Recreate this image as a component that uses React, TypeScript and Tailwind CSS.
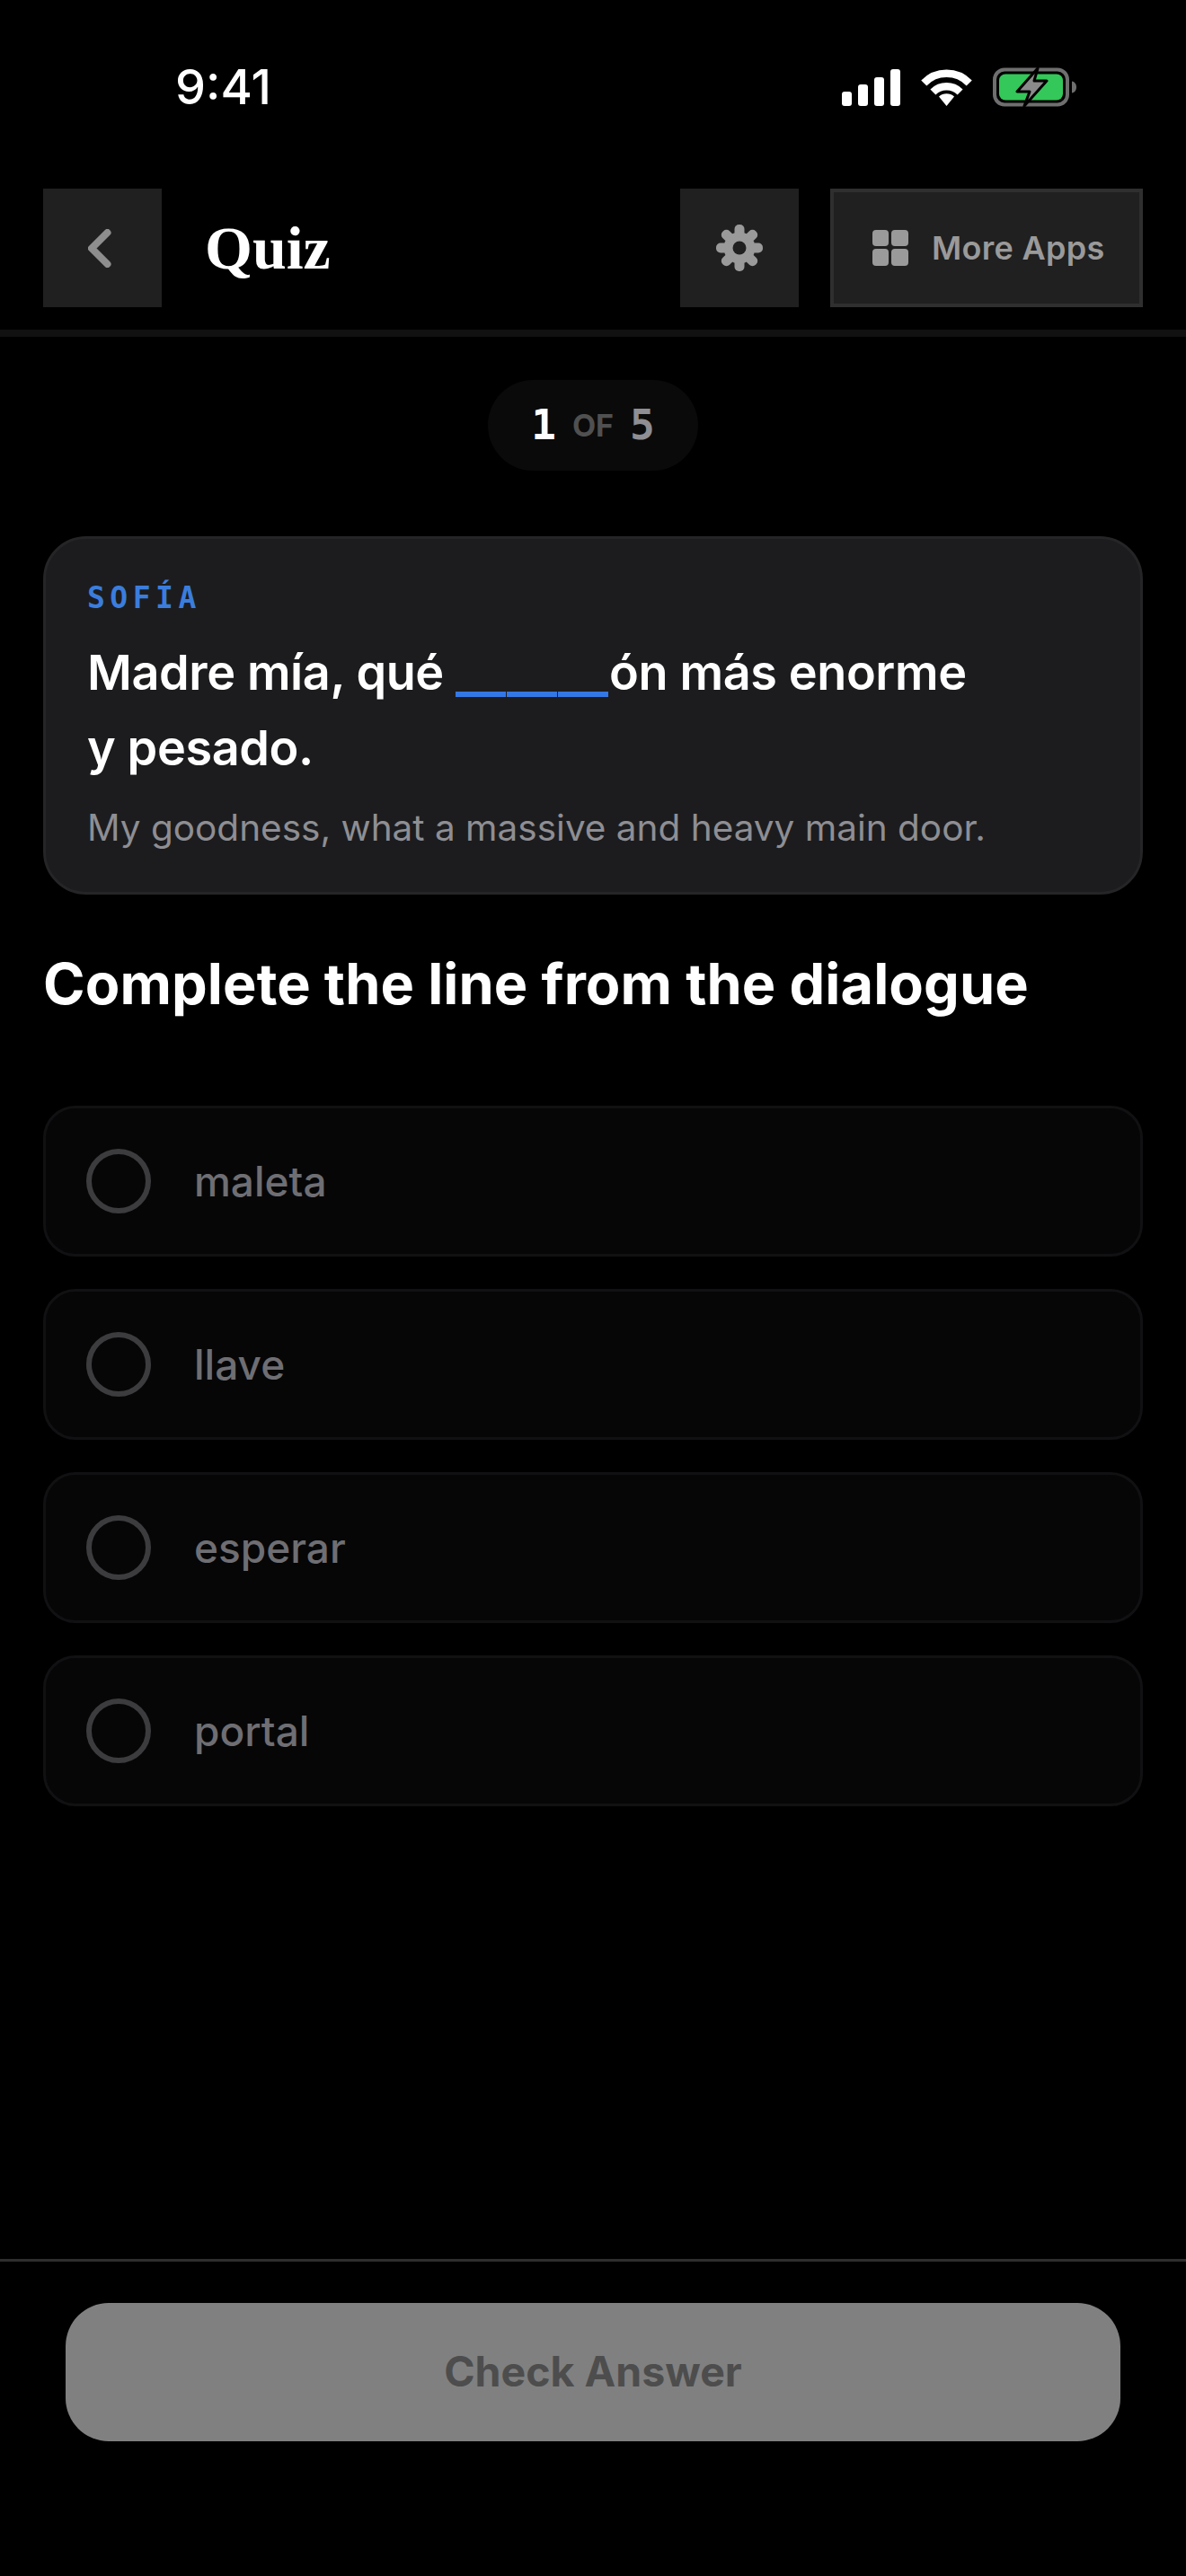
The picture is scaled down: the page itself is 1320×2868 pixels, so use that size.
const inter = "font-['Inter',sans-serif]";

function Gear() {
  const angles = [0, 45, 90, 135, 180, 225, 270, 315];
  return (
    <svg width="52" height="52" viewBox="0 0 52 52">
      <circle cx="26" cy="26" r="17.5" fill="#9a9a9a" />
      {angles.map((a) => (
        <rect key={a} x="20.5" y="0" width="11" height="14" rx="5" fill="#9a9a9a" transform={`rotate(${a} 26 26)`} />
      ))}
      <circle cx="26" cy="26" r="7.5" fill="#202020" />
    </svg>
  );
}

function Signal() {
  return (
    <svg width="65" height="41" viewBox="0 0 65 41" fill="#fff">
      <rect x="0" y="25" width="11" height="16" rx="3" />
      <rect x="18" y="17" width="11" height="24" rx="3" />
      <rect x="36" y="9" width="11" height="32" rx="3" />
      <rect x="54" y="0" width="11" height="41" rx="3" />
    </svg>
  );
}

function Wifi() {
  return (
    <svg width="57" height="42" viewBox="0 0 57 42" fill="none" stroke="#fff" strokeWidth="8.5">
      <path d="M3.3 16.5A35 35 0 0 1 53.7 16.5" />
      <path d="M13.4 26.5A21.5 21.5 0 0 1 43.6 26.5" />
      <path d="M20 31.5A13 13 0 0 1 37 31.5L28.5 42Z" fill="#fff" stroke="none" />
    </svg>
  );
}

function Battery() {
  return (
    <svg width="93" height="44" viewBox="0 0 93 44" fill="none">
      <rect x="2" y="2.5" width="81" height="39" rx="11" stroke="#6f6f6f" strokeWidth="4" />
      <rect x="7" y="7.5" width="71" height="29" rx="7" fill="#34c759" />
      <path d="M88 15.5c3 .5 5 3 5 6.5s-2 6-5 6.5Z" fill="#6f6f6f" />
      <path d="M50 1 27 27h14l-6 16 25-28H46Z" fill="#8a8a8a" stroke="#000" strokeWidth="3" strokeLinejoin="round" />
    </svg>
  );
}

function Option({ label }: { label: string }) {
  return (
    <div className="flex h-[168px] items-center rounded-[36px] border-[3px] border-[#111113] bg-[#060607] pl-[45px]">
      <div className="h-[72px] w-[72px] rounded-full border-[6px] border-[#3c3c3e]" />
      <span className={`${inter} ml-[48px] text-[46px] font-medium text-[#6e6e73]`}>{label}</span>
    </div>
  );
}

function BlankSegment() {
  return <span className="-mb-[8px] mr-[1px] inline-block h-[6px] w-[56px] bg-[#3478e6]" />;
}

export default function App() {
  return (
    <div className={`${inter} flex h-[2868px] w-[1320px] flex-col bg-black text-white`}>
      <div className="flex h-[210px] items-start justify-between pl-[195px] pr-[122px] pt-[60px]">
        <span className="text-[54px] font-medium leading-[74px]">9:41</span>
        <div className="flex items-center gap-[23px] pt-[15px]">
          <Signal />
          <Wifi />
          <Battery />
        </div>
      </div>

      <div className="flex items-center border-b-[8px] border-[#111112] px-[48px] pb-[25px]">
        <button className="flex h-[132px] w-[132px] items-center bg-[#202020] pl-[50px]">
          <svg width="26" height="43" viewBox="0 0 26 43" fill="none" stroke="#8e8e8e" strokeWidth="8" strokeLinecap="round" strokeLinejoin="round">
            <path d="M21.5 4 4 21.5 21.5 39" />
          </svg>
        </button>
        <h1 className="ml-[48px] font-['Liberation_Serif',serif] text-[68px] font-bold leading-none">Quiz</h1>
        <button className="ml-auto flex h-[132px] w-[132px] items-center justify-center bg-[#202020]">
          <Gear />
        </button>
        <button className="ml-[35px] flex h-[132px] w-[348px] items-center border-[4px] border-[#2f2f2f] bg-[#202020] pl-[43px]">
          <svg width="40" height="40" viewBox="0 0 40 40" fill="#9a9a9a">
            <rect x="0" y="0" width="18" height="18" rx="4" />
            <rect x="21" y="0" width="19" height="18" rx="4" />
            <rect x="0" y="21" width="18" height="19" rx="4" />
            <rect x="21" y="21" width="19" height="19" rx="4" />
          </svg>
          <span className="ml-[26px] text-[36px] font-semibold tracking-[0.3px] text-[#9a9a9a]">More Apps</span>
        </button>
      </div>

      <div className="mt-[48px] flex h-[101px] w-[234px] items-center justify-center self-center rounded-full bg-[#0a0a0a]">
        <span className="font-['DejaVu_Sans_Mono',monospace] text-[46px] font-bold text-white">1</span>
        <span className="mx-[18px] text-[34px] font-bold text-[#505050]">OF</span>
        <span className="font-['DejaVu_Sans_Mono',monospace] text-[46px] font-bold text-[#8e8e93]">5</span>
      </div>

      <div className="mx-[48px] mt-[73px] h-[399px] rounded-[48px] border-[3px] border-[#252527] bg-[#1c1c1e] px-[46px] pt-[44px]">
        <div className="font-['DejaVu_Sans_Mono',monospace] text-[33px] font-bold leading-[44px] tracking-[5.5px] text-[#3b7ddd]">SOFÍA</div>
        <p className="mt-[19px] text-[54px] font-semibold leading-[84px] tracking-[-0.4px]">
          Madre mía, qué{" "}
          <BlankSegment />
          <BlankSegment />
          <BlankSegment />
          ón más enorme
          <br />y pesado.
        </p>
        <p className="mt-[17px] text-[40.5px] leading-[60px] text-[#8e8e93]">My goodness, what a massive and heavy main door.</p>
      </div>

      <h2 className="mx-[48px] mt-[57px] text-[63px] font-bold leading-[84px] tracking-[0.1px]">Complete the line from the dialogue</h2>

      <div className="mx-[48px] mt-[94px] flex flex-col gap-[36px]">
        <Option label="maleta" />
        <Option label="llave" />
        <Option label="esperar" />
        <Option label="portal" />
      </div>

      <div className="mt-auto border-t-[3px] border-[#2e2e2e] pb-[150px] pt-[46px]">
        <button className="mx-[73px] flex h-[154px] w-[1174px] items-center justify-center rounded-[48px] bg-[#808080] text-[46.5px] font-bold text-[#4d4d4d]">
          Check Answer
        </button>
      </div>
    </div>
  );
}
